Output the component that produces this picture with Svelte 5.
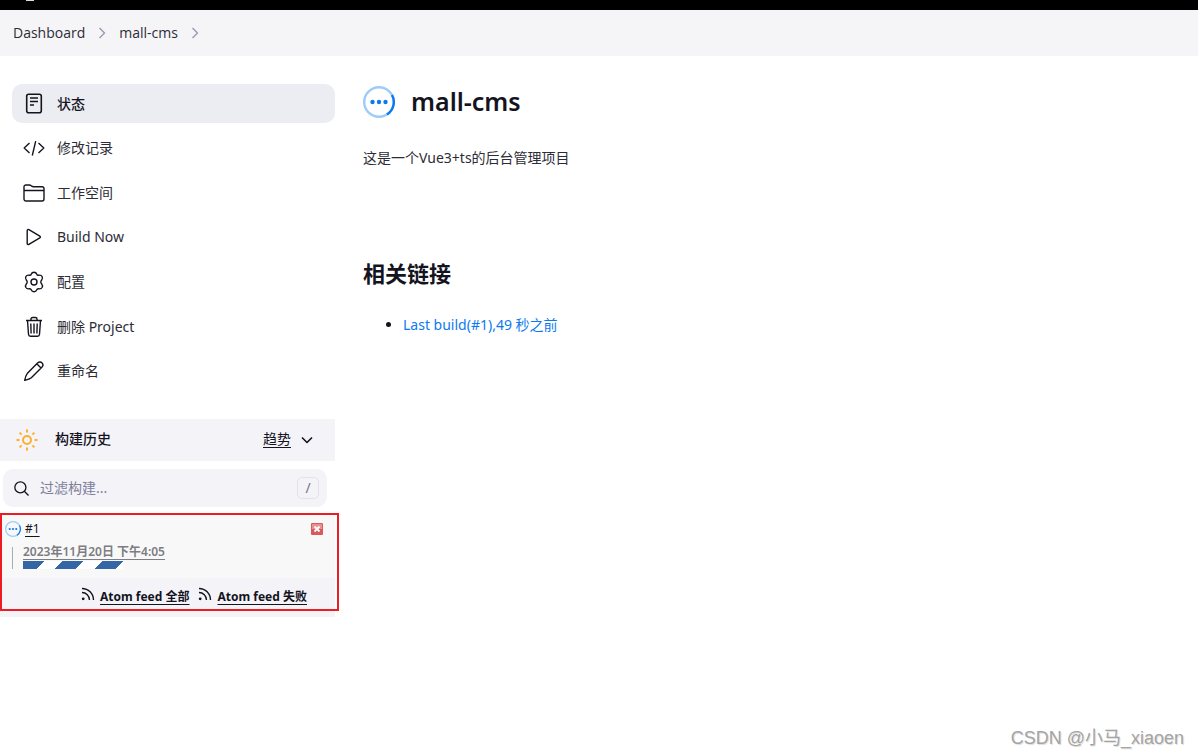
<script>
	const crumbs = ['Dashboard', 'mall-cms'];

	const tasks = [
		{ icon: 'document', label: '状态', active: true },
		{ icon: 'code', label: '修改记录' },
		{ icon: 'folder', label: '工作空间' },
		{ icon: 'play', label: 'Build Now' },
		{ icon: 'gear', label: '配置' },
		{ icon: 'trash', label: '删除 Project' },
		{ icon: 'pencil', label: '重命名' }
	];

	const feeds = ['全部', '失败'];

	let filter = $state('');
</script>

{#snippet taskIcon(name)}
	<svg class="task-icon" viewBox="0 0 22 22" aria-hidden="true">
		{#if name === 'document'}
			<rect x="3.7" y="1.2" width="14.6" height="18.6" rx="2" stroke-width="1.6" />
			<path d="M7 5h8M7 8.500h8M7 12h4" stroke-width="1.6" />
		{:else if name === 'code'}
			<path d="M6.500 6L1.200 11l5.300 5M15.500 6l5.300 5-5.300 5M12.700 4.200L9.300 18.500" />
		{:else if name === 'folder'}
			<path d="M1 17V4.8C1 3.7 1.8 3 3 3h3.3c.8 0 1.4.3 2 .8l.4.3c.5.4 1 .6 1.7.6H19c1.2 0 2 .8 2 2V17c0 1.200-.8 2-2 2H3c-1.200 0-2-.8-2-2zM1 8.500h20" />
		{:else if name === 'play'}
			<path d="M4.200 4.600v12.800c0 1 .9 1.500 1.700 1l10.900-6.500c.8-.5.8-1.300 0-1.800L5.900 3.600c-.8-.5-1.700 0-1.700 1z" />
		{:else if name === 'gear'}
			<path d="M8.200 3.200C8.700 1.800 9.700 1.200 11 1.200s2.300.6 2.800 2c.3.800 1 1.200 1.900 1 1.500-.3 2.700.1 3.400 1.300.6 1.100.6 2.300-.4 3.500-.6.700-.9 1.200-.9 2s.3 1.300.9 2c1 1.200 1 2.400.4 3.500-.7 1.200-1.900 1.600-3.400 1.300-.9-.2-1.600.2-1.900 1-.5 1.400-1.500 2-2.800 2s-2.300-.6-2.800-2c-.3-.8-1-1.200-1.900-1-1.500.3-2.700-.1-3.400-1.300-.6-1.100-.6-2.300.4-3.500.6-.7.9-1.200.9-2s-.3-1.300-.9-2c-1-1.200-1-2.400-.4-3.500.7-1.200 1.900-1.600 3.400-1.300.9.200 1.600-.2 1.900-1z" />
			<circle cx="11" cy="11" r="3" />
		{:else if name === 'trash'}
			<path d="M4.500 4.500l1 13.800c.1 1.200.8 1.900 1.900 1.900h7.200c1.100 0 1.800-.7 1.900-1.900l1-13.800M3 4.500h16M8 4.200V3c0-.9.6-1.500 1.500-1.500h3c.9 0 1.500.6 1.500 1.500v1.200M11 7.500v10M7.800 7.500l.3 10M14.200 7.500l-.3 10" />
		{:else if name === 'pencil'}
			<path d="M14.300 3.300L4.200 13.600C3.100 15 2.300 17.300 1.700 20.400c3-.7 5.300-1.500 6.600-2.700L18.600 7.600c1.400-1.400 1.700-3.300.5-4.600-1.300-1.200-3.300-1.100-4.800.3zM14 4l4 4" />
		{/if}
	</svg>
{/snippet}

{#snippet progressIcon(size)}
	<svg class="progress-icon" width={size} height={size} viewBox="0 0 32 32" aria-hidden="true">
		<circle class="ring" cx="16" cy="16" r="14.800" />
		<path class="arc" d="M29 9A14.800 14.800 0 0 1 24 28.500" />
		<circle cx="9.500" cy="16" r="2.200" />
		<circle cx="16" cy="16" r="2.200" />
		<circle cx="22.500" cy="16" r="2.200" />
	</svg>
{/snippet}

{#snippet chevron()}
	<svg class="chevron" width="8" height="12" viewBox="0 0 8 12" aria-hidden="true">
		<path d="M1.500 1l5 5-5 5" />
	</svg>
{/snippet}

<div class="page">
	<header class="top-bar"><span class="logo-edge"></span></header>

	<nav class="breadcrumbs" aria-label="Breadcrumb">
		{#each crumbs as crumb}
			<a href="#top">{crumb}</a>
			{@render chevron()}
		{/each}
	</nav>

	<div class="layout">
		<aside class="side-panel">
			<nav class="tasks">
				{#each tasks as task}
					<a href="#task" class="task" class:active={task.active}>
						{@render taskIcon(task.icon)}
						<span>{task.label}</span>
					</a>
				{/each}
			</nav>

			<section class="history">
				<div class="history-header">
					<svg class="sun" width="22" height="22" viewBox="0 0 22 22" aria-hidden="true">
						<circle cx="11" cy="11" r="4" />
						<path d="M11 .5v3M11 18.500v3M.5 11h3M18.500 11h3M3.600 3.600l2 2M16.400 16.400l2 2M3.600 18.400l2-2M16.400 5.600l2-2" />
					</svg>
					<h2>构建历史</h2>
					<a href="#trend">趋势</a>
					<svg class="down" width="12" height="8" viewBox="0 0 12 8" aria-hidden="true">
						<path d="M1 1.500l5 5 5-5" />
					</svg>
				</div>

				<div class="search">
					<svg width="15" height="15" viewBox="0 0 16 16" aria-hidden="true">
						<circle cx="6.800" cy="6.800" r="5.900" />
						<path d="M11 11l4.500 4.500" />
					</svg>
					<input type="text" placeholder="过滤构建..." aria-label="过滤构建" bind:value={filter} />
					<kbd>/</kbd>
				</div>

				<div class="builds">
					<div class="build">
						<div class="build-title">
							{@render progressIcon(16)}
							<a href="#build">#1</a>
							<button type="button" class="stop" aria-label="取消">
								<svg width="12" height="12" viewBox="0 0 12 12" aria-hidden="true">
									<rect width="12" height="12" rx="1" fill="#d85a5c" />
									<rect x="1" y="1" width="10" height="5" fill="#e99090" />
									<path d="M3.500 3.500l5 5M8.500 3.500l-5 5" stroke="#fff" stroke-width="1.800" />
								</svg>
							</button>
						</div>
						<div class="build-details">
							<a href="#build">2023年11月20日 下午4:05</a>
							<div class="progress" role="progressbar" aria-label="#1"></div>
						</div>
					</div>
					<div class="feeds">
						{#each feeds as feed}
							<div class="feed">
								<svg width="14" height="14" viewBox="0 0 14 14" aria-hidden="true">
									<path d="M1 1.500A11.500 11.500 0 0 1 12.500 13M1 5.500A7.500 7.500 0 0 1 8.500 13" />
									<circle cx="2.200" cy="11.800" r="1.400" />
								</svg>
								<a href="#feed">Atom feed {feed}</a>
							</div>
						{/each}
					</div>
					<div class="highlight"></div>
				</div>
			</section>
		</aside>

		<main>
			<div class="headline">
				{@render progressIcon(32)}
				<h1>mall-cms</h1>
			</div>
			<p>这是一个Vue3+ts的后台管理项目</p>
			<h2>相关链接</h2>
			<ul>
				<li><a href="#last">Last build(#1),49 秒之前</a></li>
			</ul>
		</main>
	</div>

	<div class="watermark">CSDN @小马_xiaoen</div>
</div>

<style>
	:global(body) {
		background: #fff;
		color: #14141f;
		font: 14px/20px 'Noto Sans', 'Noto Sans CJK SC', sans-serif;
	}

	.page {
		position: relative;
		min-height: 100vh;
	}

	a {
		color: inherit;
	}

	svg {
		display: block;
		flex: none;
		fill: none;
		stroke: #14141f;
		stroke-linejoin: round;
	}

	.top-bar {
		height: 10px;
		padding-left: 26px;
		background: #000;
	}

	.logo-edge {
		display: block;
		width: 8px;
		height: 1px;
		background: #ddd;
	}

	.breadcrumbs {
		display: flex;
		align-items: center;
		gap: 13px;
		height: 46px;
		padding-left: 13px;
		background: #f5f5f8;
		color: #2c2c36;
		font-family: 'Open Sans', 'Noto Sans CJK SC', sans-serif;
	}

	.breadcrumbs a {
		text-decoration: none;
	}

	.chevron {
		stroke: #9c9cb5;
		stroke-width: 1.5;
	}

	.layout {
		display: grid;
		grid-template-columns: 335px 1fr;
		column-gap: 28px;
		padding-top: 28px;
	}

	.tasks {
		display: flex;
		flex-direction: column;
		justify-content: space-between;
		height: 307px;
		margin: 0 0 28px 12px;
	}

	.task {
		display: flex;
		align-items: center;
		gap: 12px;
		height: 39px;
		padding: 0 11px;
		border-radius: 10px;
		color: #2c2c36;
		text-decoration: none;
	}

	.task.active {
		background: #ecedf3;
		color: #14141f;
		font-weight: 500;
	}

	.task-icon {
		width: 22px;
		height: 22px;
		stroke-width: 1.4;
	}

	.history-header {
		display: flex;
		align-items: center;
		height: 42px;
		padding: 0 22px 0 16px;
		background: #f3f3f8;
	}

	.history-header h2 {
		flex: 1;
		margin: 0 0 0 17px;
		padding-bottom: 3px;
		font-size: 14px;
		font-weight: 500;
	}

	.history-header a {
		margin-right: 10px;
		padding-bottom: 3px;
		text-underline-offset: 3px;
	}

	.sun {
		stroke: #fdb02f;
		stroke-width: 2;
	}

	.down {
		stroke-width: 1.6;
	}

	.search {
		display: flex;
		align-items: center;
		gap: 11px;
		height: 38px;
		box-sizing: border-box;
		margin: 8px 8px 8px 3px;
		padding: 0 8px 0 11px;
		border-radius: 10px;
		background: #f3f3f8;
	}

	.search svg {
		stroke-width: 1.4;
	}

	.search input {
		flex: 1;
		min-width: 0;
		padding: 0;
		border: 0;
		outline: 0;
		background: none;
		font: inherit;
	}

	.search input::placeholder {
		color: #80809a;
		opacity: 1;
	}

	kbd {
		width: 20px;
		border: 1px solid #e2e2ea;
		border-radius: 5px;
		color: #73738c;
		font: 14px/20px 'Noto Sans', sans-serif;
		text-align: center;
	}

	.builds {
		position: relative;
	}

	.build {
		height: 63px;
		box-sizing: border-box;
		padding: 4px 12px 0 5px;
		background: #f8f8f8;
		font-size: 12px;
	}

	.build-title {
		display: flex;
		align-items: center;
		gap: 4px;
	}

	.build a,
	.feeds a {
		text-underline-offset: 3px;
	}

	.stop {
		margin-left: auto;
		padding: 0;
		border: 0;
		background: none;
	}

	.stop svg {
		stroke: none;
	}

	.build-details {
		margin: 8px 0 0 7px;
		padding-left: 10px;
		border-left: 1px solid #9fb0b9;
		color: #7d7d82;
		font-weight: 600;
		line-height: 10px;
	}

	.build-details a {
		display: block;
	}

	.progress {
		width: 100px;
		height: 8px;
		margin-top: 4px;
		background: repeating-linear-gradient(
			135deg,
			#3465a4 0 15px,
			#fff 15px 28px
		);
	}

	.feeds {
		display: flex;
		justify-content: flex-end;
		gap: 9px;
		height: 39px;
		box-sizing: border-box;
		padding: 9px 28px 0 0;
		background: #f3f3f8;
		font-size: 12px;
		font-weight: 700;
	}

	.feed {
		display: flex;
		gap: 5px;
	}

	.feed svg {
		stroke-width: 1.4;
	}

	.feed circle {
		fill: #14141f;
		stroke: none;
	}

	.highlight {
		position: absolute;
		inset: -2px -4px 6px 0;
		border: 2px solid #ec1c24;
		pointer-events: none;
	}

	.progress-icon {
		fill: #0b7af0;
		stroke: none;
	}

	.progress-icon .ring {
		fill: none;
		stroke: #9dccfa;
		stroke-width: 2.4;
	}

	.progress-icon .arc {
		fill: none;
		stroke: #0b7af0;
		stroke-width: 2.4;
	}

	main {
		padding-right: 28px;
	}

	.headline {
		display: flex;
		gap: 16px;
		padding: 2px 0;
	}

	h1 {
		margin: 0;
		font: 600 25px/30px 'Noto Sans', sans-serif;
	}

	main p {
		margin: 28px 0 90px;
		color: #2c2c36;
	}

	main h2 {
		margin: 0;
		font-size: 22px;
		line-height: 30px;
	}

	main ul {
		margin: 27px 0 0;
		padding-left: 40px;
	}

	main li a {
		color: #0b7af0;
		text-decoration: none;
	}

	.watermark {
		position: absolute;
		right: 14px;
		bottom: 8px;
		color: #a4a4a4;
		font: 18px/20px 'Liberation Sans', 'Noto Sans CJK SC', sans-serif;
		text-shadow: 1px 1px 1px #ddd;
	}
</style>
